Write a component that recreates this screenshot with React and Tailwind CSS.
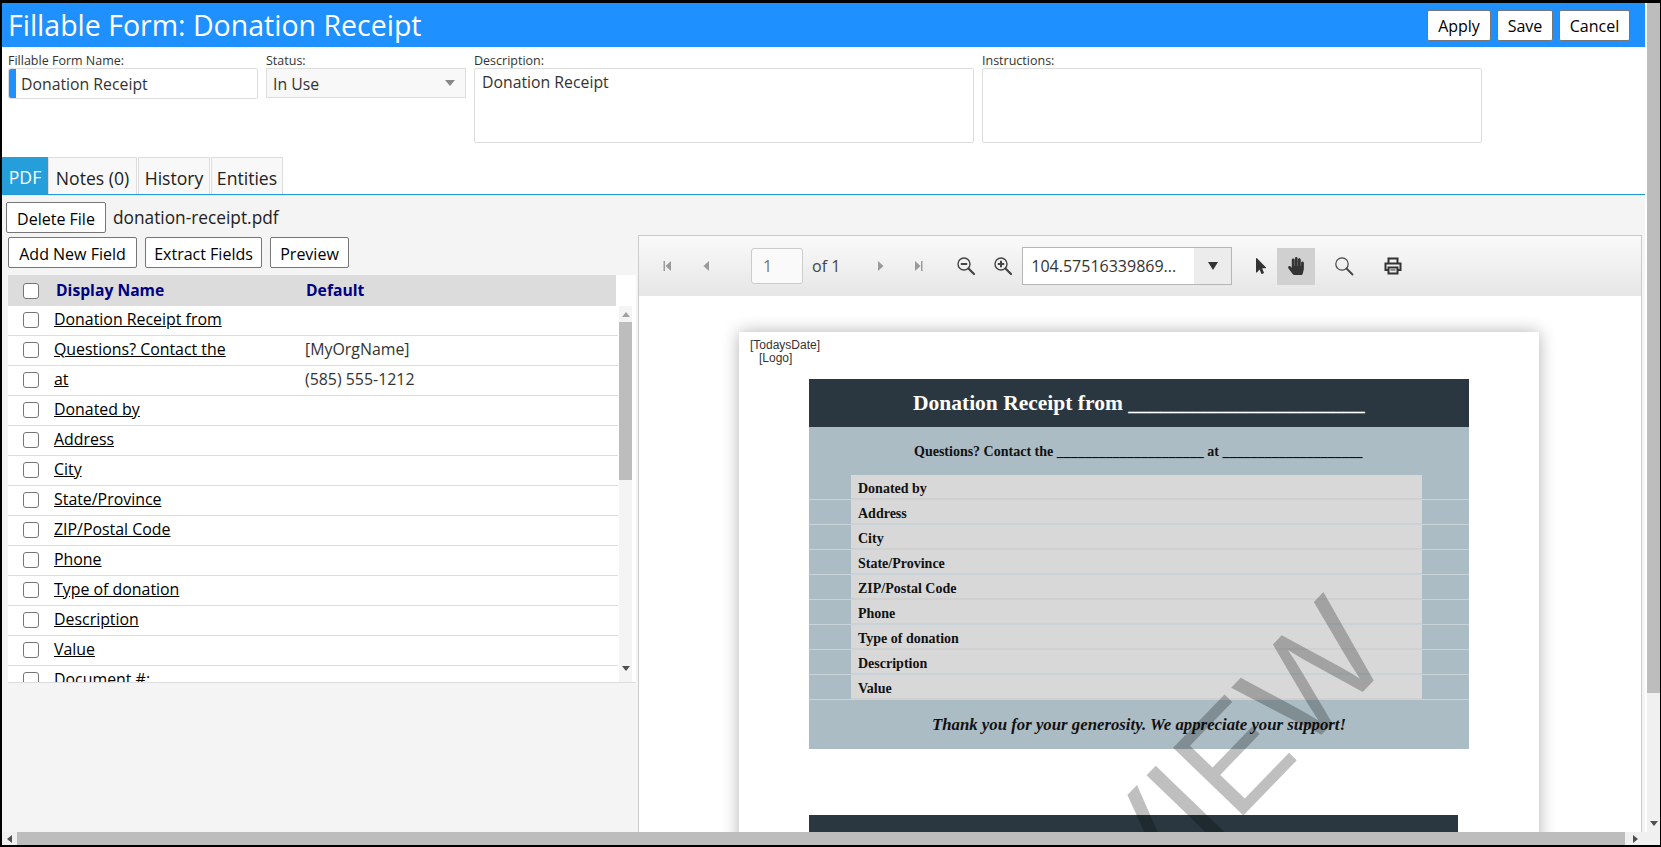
import { FaHandPaper, FaMousePointer } from "react-icons/fa";

const rows = [
  ["Donation Receipt from", ""],
  ["Questions? Contact the", "[MyOrgName]"],
  ["at", "(585) 555-1212"],
  ["Donated by", ""],
  ["Address", ""],
  ["City", ""],
  ["State/Province", ""],
  ["ZIP/Postal Code", ""],
  ["Phone", ""],
  ["Type of donation", ""],
  ["Description", ""],
  ["Value", ""],
  ["Document #:", ""],
];

const formRows = ["Donated by", "Address", "City", "State/Province", "ZIP/Postal Code", "Phone", "Type of donation", "Description", "Value"];

const Btn = ({ className = "", children }) => (
  <button className={`flex h-[31px] items-center justify-center rounded-[2px] border border-[#767676] bg-white pt-[2px] text-[16px] text-black ${className}`}>
    {children}
  </button>
);

const Check = () => <span className="block h-4 w-4 shrink-0 rounded-[3px] border border-[#767676] bg-white" />;

const Magnifier = ({ sign }) => (
  <svg width="20" height="20" viewBox="0 0 20 20" fill="none" stroke="#444">
    <circle cx="8" cy="8" r="6" strokeWidth="1.4" />
    <path d="M12.5 12.5L18 18" strokeWidth="2.2" strokeLinecap="round" />
    <path d="M4.8 8h6.4" strokeWidth="2" />
    {sign === "plus" && <path d="M8 4.8v6.4" strokeWidth="2" />}
  </svg>
);

const Arrow = ({ dir, bar }) => (
  <svg width="12" height="12" viewBox="0 0 12 12" fill="#9a9a9a">
    {dir === "left" ? <path d="M9 1v10L3.5 6z" /> : <path d="M3 1v10L8.5 6z" />}
    {bar && (dir === "left" ? <path d="M1.5 1h1.5v10H1.5z" /> : <path d="M9 1h1.5v10H9z" />)}
  </svg>
);

const Tab = ({ active, className = "", children }) => (
  <div className={`flex h-[37px] items-center justify-center pt-[4px] text-[17.6px] ${active ? "bg-[#259fd9] text-white" : "border border-b-0 border-[#dddddd] bg-[#f8f8f8] text-[#222]"} ${className}`}>
    {children}
  </div>
);

const FieldTable = () => (
  <div className="ml-[6px] mt-[7px] h-[408px] w-[628px] overflow-hidden border-b border-[#dddddd] bg-white">
    <div className="flex h-[31px] w-[608px] items-center bg-[#dcdcdc] text-[15.7px] font-bold text-[#000080]">
      <span className="ml-[15px]"><Check /></span>
      <span className="ml-[17px] w-[250px]">Display Name</span>
      <span>Default</span>
    </div>
    <div className="flex h-[377px]">
      <div className="w-[610px] overflow-hidden">
        {rows.map(([name, def]) => (
          <div key={name} className="flex h-[30px] items-center border-b border-[#dddddd] pb-[2px] text-[15.9px] text-[#333]">
            <span className="ml-[15px]"><Check /></span>
            <span className="ml-[15px] w-[251px] text-black underline">{name}</span>
            <span>{def}</span>
          </div>
        ))}
      </div>
      <div className="ml-px flex h-full w-[13px] flex-col items-center bg-[#f4f4f4]">
        <svg className="mt-[6px]" width="8" height="5" viewBox="0 0 8 5" fill="#a3a3a3"><path d="M4 0l4 5H0z" /></svg>
        <div className="mt-[5px] h-[158px] w-full bg-[#bdbdbd]" />
        <svg className="mt-[186px]" width="8" height="5" viewBox="0 0 8 5" fill="#505050"><path d="M0 0h8L4 5z" /></svg>
      </div>
    </div>
  </div>
);

const PdfPage = () => (
  <div className="relative ml-[100px] mt-[36px] h-[1035px] w-[800px] bg-white font-['Liberation_Serif',serif] shadow-[0_0_16px_rgba(0,0,0,0.3)]">
    <div className="pl-[11px] pt-[7px] font-['Liberation_Sans',sans-serif] text-[12px] leading-[13px] text-[#333]">
      <div>[TodaysDate]</div>
      <div className="pl-[9px]">[Logo]</div>
    </div>
    <div className="ml-[70px] mt-[14px] w-[660px] bg-[#abbcc5]">
      <div className="flex h-[48px] items-center bg-[#2a3740] pl-[104px] text-[21.5px] font-bold text-white">
        Donation Receipt from ______________________
      </div>
      <div className="flex h-[48px] items-center pl-[105px] text-[14px] font-bold text-[#111]">
        Questions? Contact the _____________________ at ____________________
      </div>
      <div>
        {formRows.map((r) => (
          <div key={r} className="flex h-[25px] border-b border-[#c8d4da]">
            <div className="w-[42px]" />
            <div className="flex w-[571px] items-center border-b border-[#d0d0d0] bg-[#d8d8d8] pl-[7px] pt-[3px] text-[14px] font-bold text-[#111]">{r}</div>
          </div>
        ))}
      </div>
      <div className="flex h-[49px] items-center justify-center text-[16.8px] font-bold italic text-[#111]">
        Thank you for your generosity. We appreciate your support!
      </div>
    </div>
    <div className="ml-[70px] mt-[66px] h-[60px] w-[649px] bg-[#2a3740]" />
    <div className="pointer-events-none absolute inset-0 flex items-center justify-center overflow-hidden">
      <span className="-translate-x-[8px] translate-y-[11px] -rotate-[46deg] font-['Liberation_Sans',sans-serif] text-[142px] leading-none text-black/25">PREVIEW</span>
    </div>
  </div>
);

const Viewer = () => (
  <div className="ml-[2px] mt-[40px] flex h-[597px] w-[1004px] flex-col overflow-hidden border-x border-t border-[#cccccc] bg-white">
    <div className="flex h-[60px] shrink-0 items-center bg-gradient-to-b from-[#fafafa] to-[#e6e6e6] text-[#444]">
      <span className="ml-[23px]"><Arrow dir="left" bar /></span>
      <span className="ml-[26px]"><Arrow dir="left" /></span>
      <div className="ml-[39px] flex h-[36px] w-[52px] items-center rounded-[3px] border border-[#cccccc] bg-[#fafafa] pl-[11px] text-[16px] text-[#777]">1</div>
      <span className="ml-[9px] text-[16px]">of 1</span>
      <span className="ml-[35px]"><Arrow dir="right" /></span>
      <span className="ml-[25px]"><Arrow dir="right" bar /></span>
      <span className="ml-[32px]"><Magnifier sign="minus" /></span>
      <span className="ml-[17px]"><Magnifier sign="plus" /></span>
      <div className="ml-[9px] flex h-[38px] w-[210px] items-center border border-[#b5b5b5] bg-white">
        <span className="flex-1 pl-[8px] text-[16px] text-[#333]">104.57516339869...</span>
        <span className="flex h-full w-[37px] items-center justify-center bg-[#ececec]">
          <svg width="12" height="8" viewBox="0 0 12 8" fill="#333"><path d="M1 0h10L6 8z" /></svg>
        </span>
      </div>
      <span className="ml-[21px] text-[#333]"><FaMousePointer size={16} /></span>
      <span className="ml-[8px] flex h-[37px] w-[38px] items-center justify-center bg-[#d0d0d0] text-[#333]"><FaHandPaper size={18} /></span>
      <span className="ml-[19px]">
        <svg width="20" height="20" viewBox="0 0 20 20" fill="none" stroke="#444">
          <circle cx="8" cy="8" r="6.2" strokeWidth="1.2" />
          <path d="M12.5 12.5L18.5 18.5" strokeWidth="1.8" strokeLinecap="round" />
        </svg>
      </span>
      <span className="ml-[29px]">
        <svg width="20" height="20" viewBox="0 0 20 20" fill="none" stroke="#333" strokeWidth="2">
          <path d="M5.5 7V2.5h9V7" />
          <path d="M5 14H2.5V7.5h15V14H15" />
          <path d="M5.5 11.5h9v6h-9z" />
          <path d="M7.5 14h5" strokeWidth="1" />
        </svg>
      </span>
    </div>
    <div className="flex-1 overflow-hidden"><PdfPage /></div>
  </div>
);

export default function App() {
  return (
    <div className="flex h-screen w-full flex-col overflow-hidden bg-black pb-[2px] pl-[2px] pr-px pt-[3px] font-['Open_Sans',sans-serif]">
      <div className="flex min-h-0 flex-1 bg-white">
        <div className="flex w-[1643px] shrink-0 flex-col">
          <div className="flex h-[44px] shrink-0 items-center justify-between bg-[#1e90ff] pl-[6px] pr-[15px]">
            <span className="text-[28.5px] text-white">Fillable Form: Donation Receipt</span>
            <div className="flex gap-[6px]">
              <Btn className="w-[64px]">Apply</Btn>
              <Btn className="w-[56px]">Save</Btn>
              <Btn className="w-[71px]">Cancel</Btn>
            </div>
          </div>
          <div className="flex h-[110px] shrink-0 text-[12.5px] text-[#333]">
            <div className="ml-[6px] w-[250px]">
              <div className="mt-[6px] h-[15px] leading-[15px]">Fillable Form Name:</div>
              <div className="flex h-[31px] items-center rounded-[2px] border border-[#dddddd] text-[15.8px]">
                <span className="h-full w-[7px] rounded-l-[2px] bg-[#1e90ff]" />
                <span className="ml-[5px] pt-[3px]">Donation Receipt</span>
              </div>
            </div>
            <div className="ml-[8px] w-[200px]">
              <div className="mt-[6px] h-[15px] leading-[15px]">Status:</div>
              <div className="flex h-[30px] items-center justify-between border border-[#dddddd] bg-[#f8f8f8] pl-[6px] pr-[10px] text-[15.8px]">
                <span className="pt-[3px]">In Use</span>
                <svg width="10" height="6" viewBox="0 0 10 6" fill="#888"><path d="M0 0h10L5 6z" /></svg>
              </div>
            </div>
            <div className="ml-[8px] w-[500px]">
              <div className="mt-[6px] h-[15px] leading-[15px]">Description:</div>
              <div className="h-[75px] rounded-[2px] border border-[#dddddd] px-[7px] pt-[2px] text-[15.8px]">Donation Receipt</div>
            </div>
            <div className="ml-[8px] w-[500px]">
              <div className="mt-[6px] h-[15px] leading-[15px]">Instructions:</div>
              <div className="h-[75px] rounded-[2px] border border-[#dddddd]" />
            </div>
          </div>
          <div className="flex h-[38px] shrink-0 border-b border-[#1e9ad6]">
            <Tab active className="w-[46px]">PDF</Tab>
            <Tab className="w-[89px]">Notes (0)</Tab>
            <Tab className="ml-px w-[72px]">History</Tab>
            <Tab className="ml-px w-[72px]">Entities</Tab>
          </div>
          <div className="flex min-h-0 flex-1 bg-[#f4f4f4]">
            <div className="w-[634px] shrink-0">
              <div className="ml-[4px] mt-[7px] flex items-center">
                <Btn className="w-[100px]">Delete File</Btn>
                <span className="ml-[7px] pt-px text-[17.3px] text-[#222]">donation-receipt.pdf</span>
              </div>
              <div className="ml-[6px] mt-[4px] flex gap-[8px]">
                <Btn className="w-[129px]">Add New Field</Btn>
                <Btn className="w-[117px]">Extract Fields</Btn>
                <Btn className="w-[79px]">Preview</Btn>
              </div>
              <FieldTable />
            </div>
            <Viewer />
          </div>
        </div>
        <div className="ml-[2px] flex w-[13px] flex-col items-center bg-[#f0f0f0]">
          <div className="h-[690px] w-full bg-[#bdbdbd]" />
          <svg className="mt-[128px]" width="8" height="5" viewBox="0 0 8 5" fill="#505050"><path d="M0 0h8L4 5z" /></svg>
        </div>
      </div>
      <div className="flex h-[13px] shrink-0 items-center bg-[#f0f0f0]">
        <span className="flex w-[15px] justify-center">
          <svg width="5" height="8" viewBox="0 0 5 8" fill="#505050"><path d="M5 0v8L0 4z" /></svg>
        </span>
        <div className="h-full w-[1608px] bg-[#bdbdbd]" />
        <span className="flex w-[20px] justify-center">
          <svg width="5" height="8" viewBox="0 0 5 8" fill="#505050"><path d="M0 0v8l5-4z" /></svg>
        </span>
      </div>
    </div>
  );
}
